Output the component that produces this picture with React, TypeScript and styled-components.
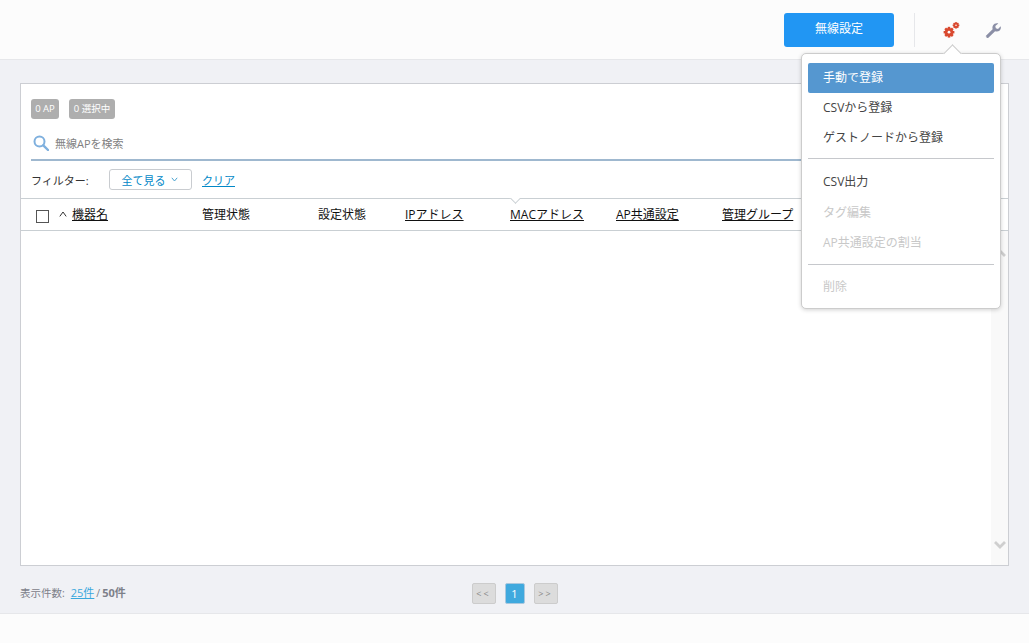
import React from "react";
import styled, { createGlobalStyle } from "styled-components";

const Global = createGlobalStyle`
  html, body { margin: 0; padding: 0; background: #f0f1f5; }
  * { box-sizing: border-box; }
  body { font-family: "Open Sans", "Noto Sans CJK JP", sans-serif; font-size: 12px; color: #333; }
`;

const Page = styled.div`
  width: 1029px; height: 643px; display: flex; flex-direction: column; position: relative; overflow: hidden; background: #f0f1f5;
`;
const Header = styled.header`
  height: 60px; flex: none; background: #fcfcfc; border-bottom: 1px solid #e6e7ea;
  display: flex; align-items: flex-start; justify-content: flex-end; padding: 13px 26px 0 0;
`;
const PrimaryButton = styled.button`
  width: 110px; height: 34px; border: none; border-radius: 3px; background: #2196f3; color: #fff;
  font: inherit; font-size: 12px; padding: 0 0 4px; margin-right: 20px;
`;
const Divider = styled.div`
  width: 1px; height: 34px; background: #e6e7ea; margin-right: 27px;
`;
const IconSlot = styled.div<{ $gap: number }>`
  width: 20px; height: 20px; margin-top: 7px; margin-right: ${p => p.$gap}px; display: flex;
`;
const Main = styled.main`
  flex: none; padding: 23px 20px 0;
`;
const Card = styled.section`
  height: 483px; background: #fff; border: 1px solid #ccced3; display: flex; flex-direction: column; position: relative;
`;
const Badges = styled.div`
  display: flex; gap: 10px; padding: 15px 0 0 10px; height: 44px;
`;
const Badge = styled.span<{ $w: number }>`
  width: ${p => p.$w}px; height: 20px; background: #aeaeae; color: #fff; border-radius: 3px; font-size: 9.5px;
  display: flex; align-items: center; justify-content: center; line-height: 1;
`;
const SearchRow = styled.div`
  margin: 0 10px; height: 33px; display: flex; align-items: center; gap: 6px; padding-left: 2px; border-bottom: 2px solid #9fb8cf; padding-bottom: 2px;
`;
const Placeholder = styled.span`
  font-size: 11px; color: #7f7f7f;
`;
const FilterRow = styled.div`
  height: 37px; display: flex; align-items: center; padding-left: 10px;
`;
const FilterLabel = styled.span`
  width: 78px; font-size: 11px; color: #333;
`;
const FilterButton = styled.button`
  width: 83px; height: 21px; border: 1px solid #c9ccd0; border-radius: 3px; background: #fff; color: #0288c7;
  font: inherit; font-size: 11px; padding: 0 2px 0 0; margin-right: 10px; display: flex; align-items: center; justify-content: center; gap: 5px;
`;
const ClearLink = styled.a`
  color: #0288c7; font-size: 11px; text-decoration: underline;
`;
const TableHead = styled.div`
  height: 33px; flex: none; border-top: 1px solid #c9cfd3; border-bottom: 1px solid #c9cfd3; display: flex; align-items: center; position: relative; padding-left: 15px;
`;
const Check = styled.span`
  width: 13px; height: 13px; border: 1px solid #555; background: #fff; flex: none; margin-right: 10px; margin-top: 4px;
`;
const SortCaret = styled.svg`
  width: 8px; height: 6px; flex: none; margin-right: 5px; margin-top: -1px;
`;
const Col = styled.span<{ $w: number; $link?: boolean }>`
  width: ${p => p.$w}px; flex: none; font-size: 12px; color: #111; white-space: nowrap; padding-bottom: 2px;
  ${p => (p.$link ? "span { text-decoration: underline; }" : "")}
`;
const Notch = styled.span`
  position: absolute; left: 488px; top: -1px; width: 12px; height: 7px; overflow: hidden;
  &::before { content: ""; position: absolute; left: 2px; top: -5px; width: 8px; height: 8px; background: #fff; border-right: 1px solid #c9cfd3; border-bottom: 1px solid #c9cfd3; transform: rotate(45deg); }
`;
const Body = styled.div`
  flex: 1; display: flex; justify-content: flex-end;
`;
const Scrollbar = styled.div`
  width: 17px; background: #f9f9f9; display: flex; flex-direction: column; justify-content: space-between; align-items: center; padding: 18px 0 16px;
`;
const FooterRow = styled.div`
  height: 47px; flex: none; padding: 0 20px; position: relative; display: flex; align-items: center; justify-content: center;
`;
const Count = styled.div`
  position: absolute; left: 20px; top: 19px; font-size: 10.5px; color: #7d8089; line-height: 16px; display: flex; gap: 2px;
  a { color: #3aa8dd; text-decoration: underline; margin-left: 4px; font-size: 11px; }
  b { font-weight: 700; font-size: 11px; }
`;
const Pager = styled.div`
  display: flex; gap: 9px; margin-top: 8px;
`;
const PageBtn = styled.span<{ $active?: boolean }>`
  width: ${p => (p.$active ? 20 : 24)}px; height: 21px; border-radius: 2px; font-size: ${p => (p.$active ? 11 : 9)}px;
  border: 1px solid ${p => (p.$active ? "#aac8de" : "#cccccc")}; background: ${p => (p.$active ? "#3fa9de" : "#dcdcdc")};
  color: ${p => (p.$active ? "#fff" : "#888")}; display: flex; align-items: center; justify-content: center; letter-spacing: ${p => (p.$active ? 0 : 2)}px;
`;
const Bottom = styled.footer`
  flex: 1; background: #fcfcfc; border-top: 1px solid #e6e7ea;
`;
const Menu = styled.div`
  position: absolute; left: 801px; top: 53px; width: 200px; height: 256px; background: #fff; border: 1px solid #ccc; border-radius: 5px;
  box-shadow: 0 1px 4px rgba(0,0,0,.18); padding: 9px 6px; display: flex; flex-direction: column;
  &::before { content: ""; position: absolute; left: 144px; top: -7px; width: 12px; height: 12px; background: #fff; border-left: 1px solid #ccc; border-top: 1px solid #ccc; transform: rotate(45deg); }
`;
const MenuItem = styled.div<{ $state?: "active" | "disabled" }>`
  height: 30px; flex: none; display: flex; align-items: center; padding: 0 0 ${p => (p.$state === "disabled" ? 0 : 3)}px 15px; font-size: 12px; border-radius: 2px; position: relative;
  color: ${p => (p.$state === "active" ? "#fff" : p.$state === "disabled" ? "#c8c8c8" : "#444")};
  background: ${p => (p.$state === "active" ? "#5597d0" : "transparent")};
`;
const MenuSep = styled.div<{ $top: number }>`
  height: 1px; flex: none; background: #c6c8cc; margin: ${p => p.$top}px 0 ${p => 13 - p.$top}px;
`;

const Gear = ({ cx, cy, r, hole }: { cx: number; cy: number; r: number; hole: number }) => {
  const teeth = Array.from({ length: 4 }, (_, i) => i * 45);
  return (
    <g>
      {teeth.map(a => (
        <rect key={a} x={cx - r * 0.3} y={cy - r * 1.28} width={r * 0.6} height={r * 2.56} fill="#d9492f" transform={`rotate(${a} ${cx} ${cy})`} />
      ))}
      <circle cx={cx} cy={cy} r={r} fill="#d9492f" />
      <circle cx={cx} cy={cy} r={hole} fill="#fcfcfc" />
    </g>
  );
};

export default function App() {
  return (
    <Page>
      <Global />
      <Header>
        <PrimaryButton>無線設定</PrimaryButton>
        <Divider />
        <IconSlot $gap={21}>
          <svg width="20" height="20" viewBox="0 0 20 20">
            <Gear cx={7} cy={12.2} r={4.2} hole={1.4} />
            <Gear cx={14} cy={5.3} r={2.6} hole={0.8} />
          </svg>
        </IconSlot>
        <IconSlot $gap={0}>
          <svg width="20" height="20" viewBox="0 0 20 20">
            <path d="M2.5 16.2 9.6 9.3C9 7 9.8 4.8 11.6 3.8c1.3-.7 2.7-.7 3.7-.3l-3 2.6.5 2.2 2.2.6 2.7-2.7c.4 1.6.1 3.2-1 4.2-1.3 1.2-3 1.4-4.6.8l-7 6.7c-.9.6-2.3-.5-1.7-1.6z" fill="#8b8fa6" />
          </svg>
        </IconSlot>
      </Header>
      <Main>
        <Card>
          <Badges>
            <Badge $w={28}>0 AP</Badge>
            <Badge $w={46}>0 選択中</Badge>
          </Badges>
          <SearchRow>
            <svg width="16" height="16" viewBox="0 0 16 16">
              <circle cx="6.5" cy="6.5" r="5" fill="none" stroke="#7fb0de" strokeWidth="2" />
              <path d="M10.3 10.3 15 15" stroke="#7fb0de" strokeWidth="2.4" strokeLinecap="round" />
            </svg>
            <Placeholder>無線APを検索</Placeholder>
          </SearchRow>
          <FilterRow>
            <FilterLabel>フィルター:</FilterLabel>
            <FilterButton>
              全て見る
              <svg width="7" height="5" viewBox="0 0 7 5"><path d="M.8 .8 3.5 4 6.2 .8" fill="none" stroke="#4aa3cf" /></svg>
            </FilterButton>
            <ClearLink>クリア</ClearLink>
          </FilterRow>
          <TableHead>
            <Check />
            <SortCaret viewBox="0 0 8 6"><path d="M.8 5.4 4 1 7.2 5.4" fill="none" stroke="#333" /></SortCaret>
            <Col $w={130} $link><span>機器名</span></Col>
            <Col $w={116}>管理状態</Col>
            <Col $w={87}>設定状態</Col>
            <Col $w={105} $link><span>IPアドレス</span></Col>
            <Col $w={106} $link><span>MACアドレス</span></Col>
            <Col $w={106} $link><span>AP共通設定</span></Col>
            <Col $w={90} $link><span>管理グループ</span></Col>
            <Notch />
          </TableHead>
          <Body>
            <Scrollbar>
              <svg width="12" height="8" viewBox="0 0 12 8"><path d="M1 7 6 2l5 5" fill="none" stroke="#cfcfcf" strokeWidth="2.8" /></svg>
              <svg width="12" height="8" viewBox="0 0 12 8"><path d="M1 1l5 5 5-5" fill="none" stroke="#cfcfcf" strokeWidth="2.8" /></svg>
            </Scrollbar>
          </Body>
        </Card>
      </Main>
      <FooterRow>
        <Count><span>表示件数:</span><a>25件</a><span>/</span><b>50件</b></Count>
        <Pager>
          <PageBtn>&lt;&lt;</PageBtn>
          <PageBtn $active>1</PageBtn>
          <PageBtn>&gt;&gt;</PageBtn>
        </Pager>
      </FooterRow>
      <Bottom />
      <Menu>
        <MenuItem $state="active">手動で登録</MenuItem>
        <MenuItem>CSVから登録</MenuItem>
        <MenuItem>ゲストノードから登録</MenuItem>
        <MenuSep $top={5} />
        <MenuItem>CSV出力</MenuItem>
        <MenuItem $state="disabled">タグ編集</MenuItem>
        <MenuItem $state="disabled">AP共通設定の割当</MenuItem>
        <MenuSep $top={7} />
        <MenuItem $state="disabled">削除</MenuItem>
      </Menu>
    </Page>
  );
}
